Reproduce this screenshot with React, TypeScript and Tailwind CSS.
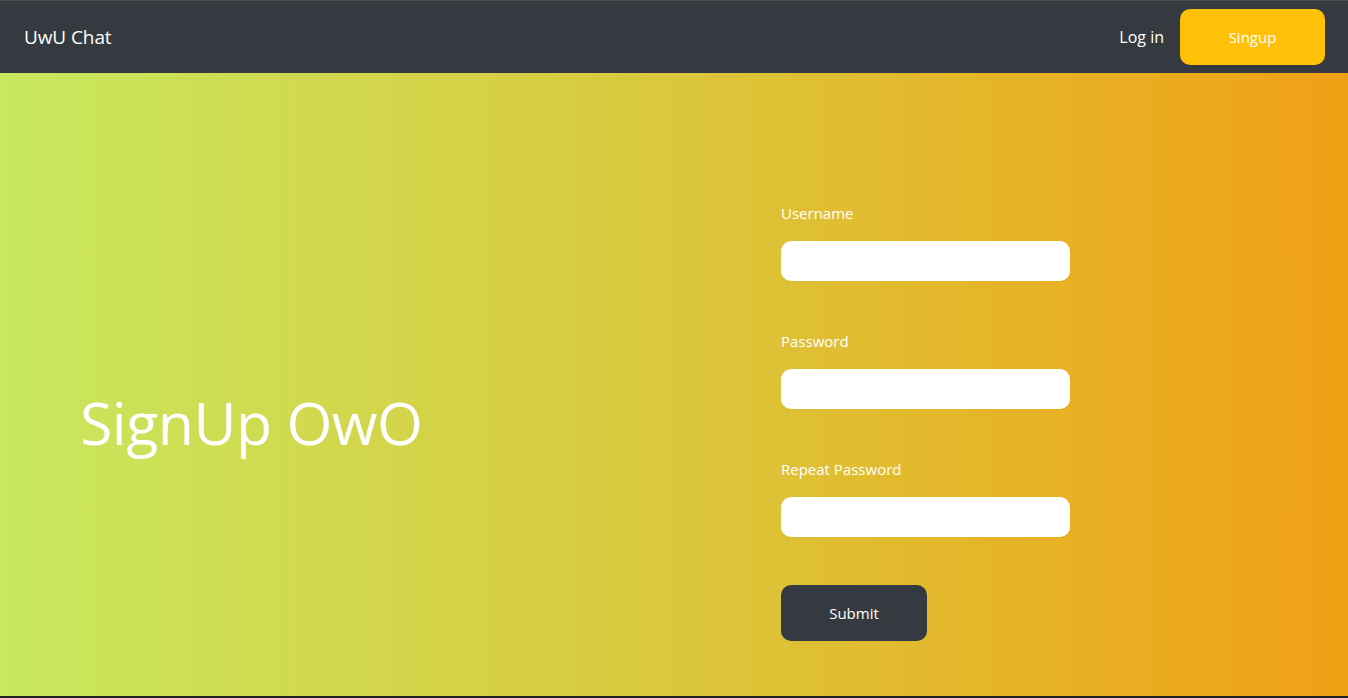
export default function App() {
  const font = { fontFamily: '"Open Sans", "Noto Sans", sans-serif' };
  const labels = ["Username", "Password", "Repeat Password"];
  return (
    <div className="w-[1348px] h-[698px] flex flex-col overflow-hidden" style={font}>
      <nav className="h-[73px] shrink-0 bg-[#343a40] border-t border-[#4d4d4d] flex items-center justify-between pl-6 pr-[23px]">
        <span className="text-white text-[19px] tracking-[-0.1px]">UwU Chat</span>
        <div className="flex items-center gap-4">
          <span className="text-white text-[16px]">Log in</span>
          <button className="w-[145px] h-[56px] rounded-[10px] bg-[#ffc107] text-white text-[15px]">Singup</button>
        </div>
      </nav>
      <main className="flex-1 flex bg-[linear-gradient(to_right,#c8e85f,#dbc73b_50%,#f0a015)]">
        <div className="w-[781px] shrink-0 flex items-center pl-[80px] pt-[76px]">
          <h1 className="text-white text-[59px] leading-none tracking-[-0.5px]">SignUp OwO</h1>
        </div>
        <form className="flex flex-col pt-[130px]">
          {labels.map((l, i) => (
            <div key={l} className={"flex flex-col " + (i === 2 ? "mb-[48px]" : "mb-[50px]")}>
              <label className="text-white text-[15px] leading-[20px] h-[20px]">{l}</label>
              <input className="mt-[18px] w-[289px] h-[40px] rounded-[10px] bg-white outline-none" />
            </div>
          ))}
          <button type="button" className="w-[146px] h-[56px] rounded-[10px] bg-[#343a40] text-white text-[15px]">Submit</button>
        </form>
      </main>
      <div className="h-[2px] shrink-0 bg-[#222222]" />
    </div>
  );
}
